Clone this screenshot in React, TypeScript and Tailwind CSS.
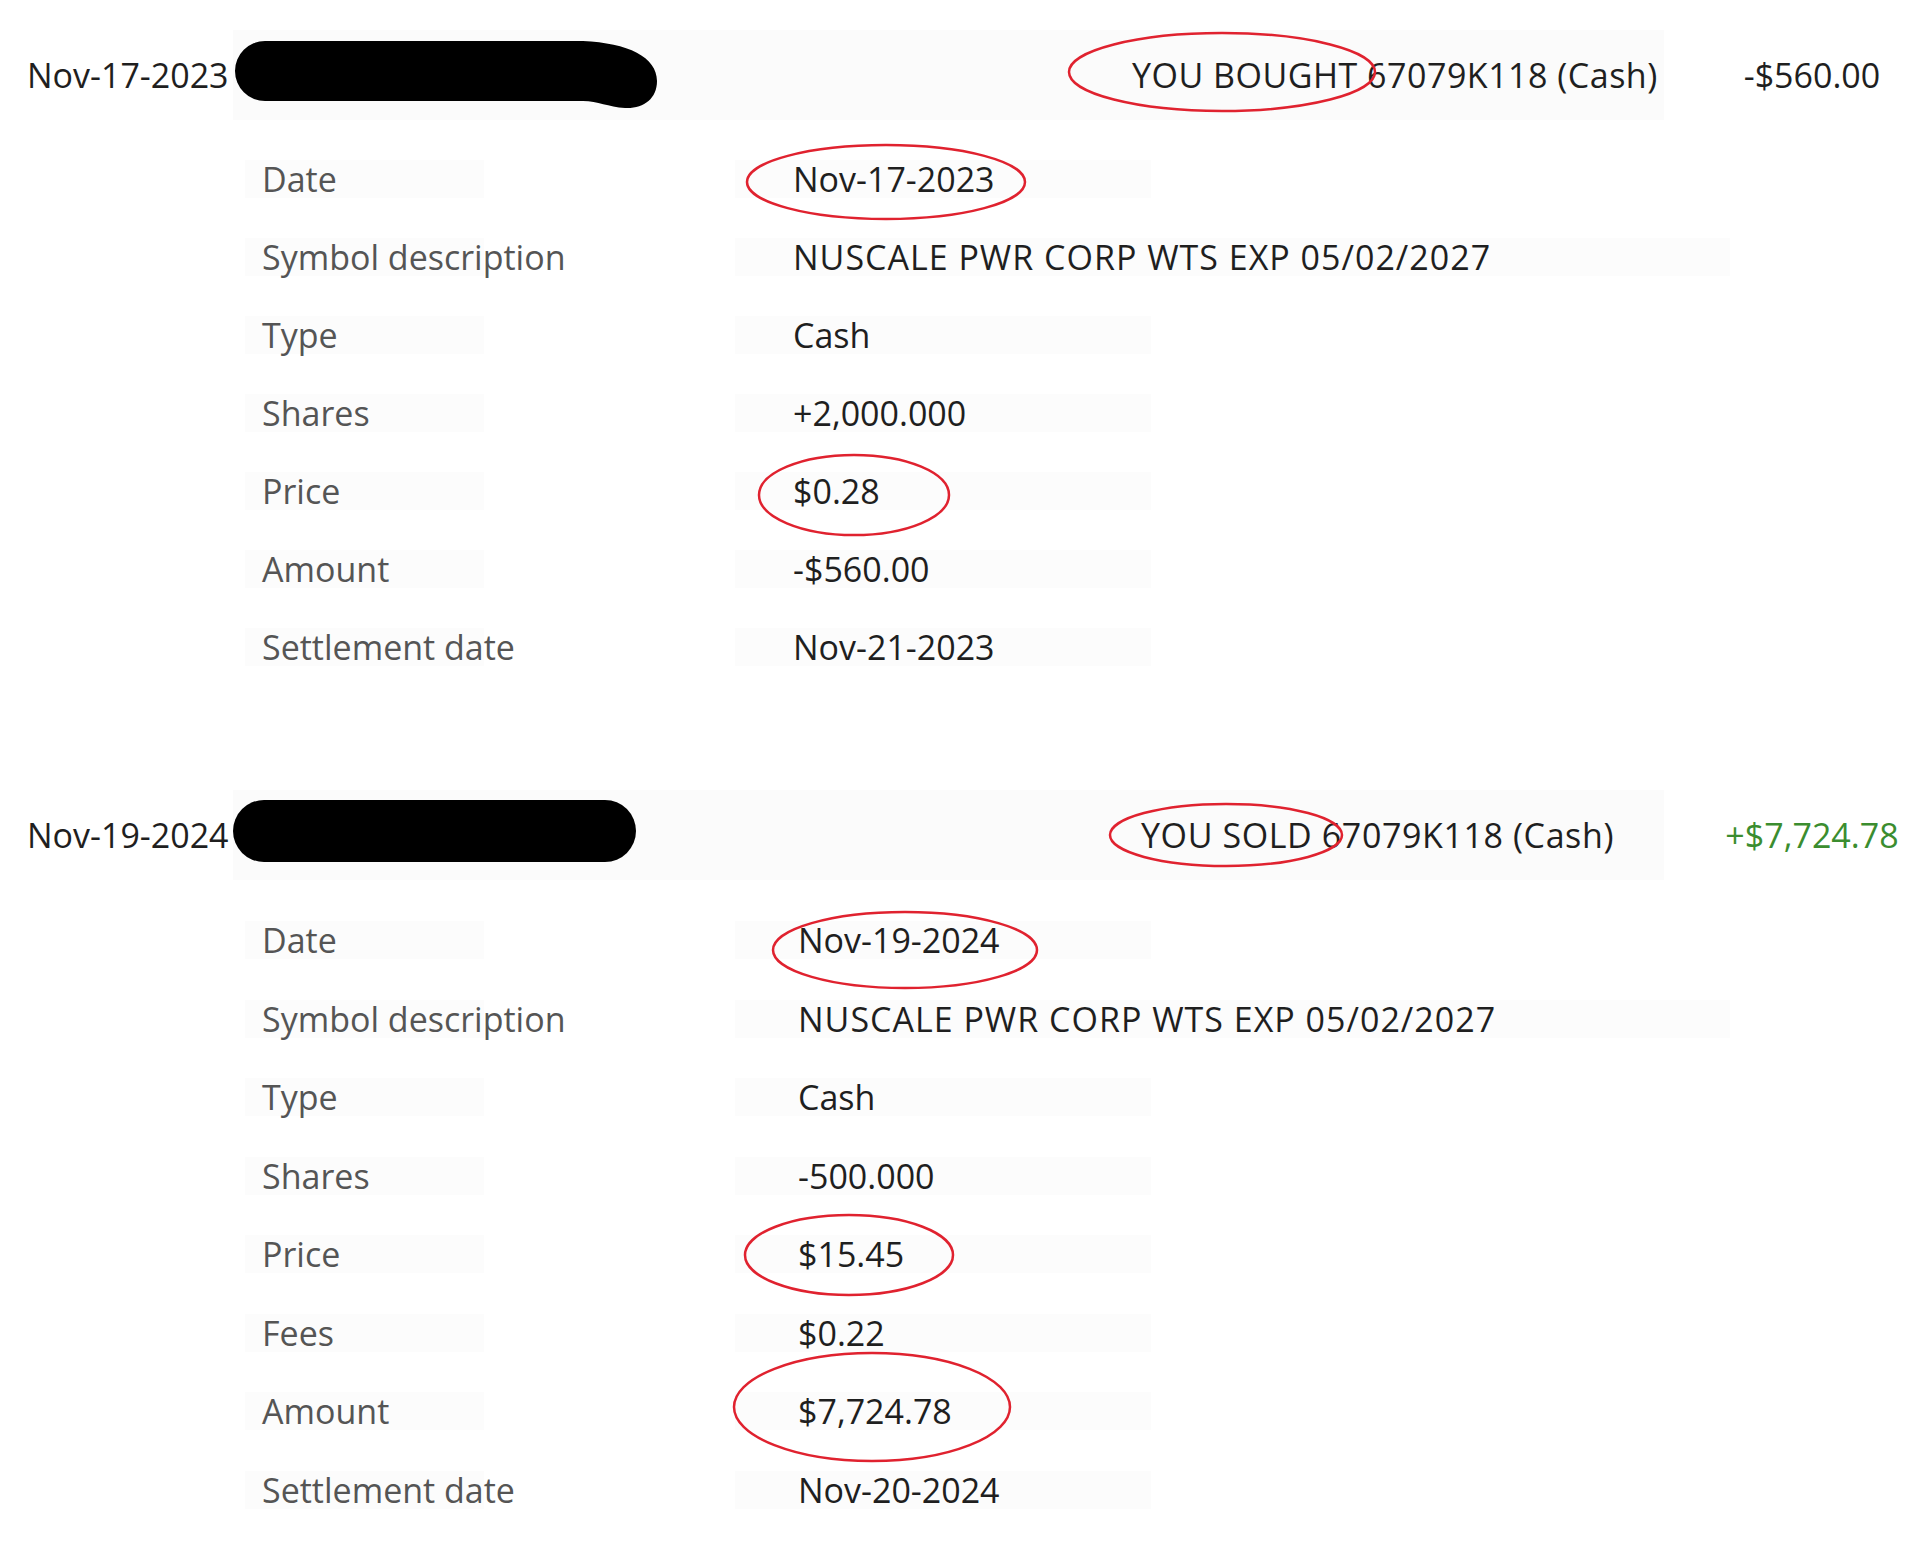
import React from "react";

type Row = { label: string; value: string; wide?: boolean };

const boughtRows: Row[] = [
  { label: "Date", value: "Nov-17-2023" },
  { label: "Symbol description", value: "NUSCALE PWR CORP WTS EXP 05/02/2027", wide: true },
  { label: "Type", value: "Cash" },
  { label: "Shares", value: "+2,000.000" },
  { label: "Price", value: "$0.28" },
  { label: "Amount", value: "-$560.00" },
  { label: "Settlement date", value: "Nov-21-2023" },
];

const soldRows: Row[] = [
  { label: "Date", value: "Nov-19-2024" },
  { label: "Symbol description", value: "NUSCALE PWR CORP WTS EXP 05/02/2027", wide: true },
  { label: "Type", value: "Cash" },
  { label: "Shares", value: "-500.000" },
  { label: "Price", value: "$15.45" },
  { label: "Fees", value: "$0.22" },
  { label: "Amount", value: "$7,724.78" },
  { label: "Settlement date", value: "Nov-20-2024" },
];

// hand-drawn red circles from the annotated screenshot
const marks = [
  { cx: 1222, cy: 72, rx: 153, ry: 39 },
  { cx: 886, cy: 182, rx: 139, ry: 37 },
  { cx: 854, cy: 495, rx: 95, ry: 40 },
  { cx: 1226, cy: 835, rx: 116, ry: 31 },
  { cx: 905, cy: 950, rx: 132, ry: 38 },
  { cx: 849, cy: 1255, rx: 104, ry: 40 },
  { cx: 872, cy: 1407, rx: 138, ry: 54 },
];

const BlobMark = () => (
  <svg width="426" height="72" viewBox="0 0 426 72" className="shrink-0">
    <path
      d="M32,2 L350,2 C395,4 424,18 424,42 C424,60 410,70 392,69 C375,68 365,62 350,62 L32,62 A30,30 0 0 1 32,2 Z"
      fill="#000"
    />
  </svg>
);

const DetailRow = ({ row, valueClass, rowClass }: { row: Row; valueClass: string; rowClass: string }) => (
  <div className={`flex items-center ${rowClass}`}>
    <div className="ml-[245px] w-[239px] h-[38px] flex items-center pl-[17px] bg-[#fcfcfc] text-[#555555] whitespace-nowrap">
      {row.label}
    </div>
    <div
      className={`ml-[251px] h-[38px] flex items-center bg-[#fcfcfc] text-[#1f1f1f] whitespace-nowrap ${valueClass} ${
        row.wide ? "w-[995px] tracking-[1px]" : "w-[416px]"
      }`}
    >
      {row.value}
    </div>
  </div>
);

const App = () => {
  return (
    <div className="relative w-[1920px] h-[1553px] bg-white overflow-hidden font-['Open_Sans','Liberation_Sans',sans-serif] text-[34px] leading-none">
      {/* bought */}
      <div className="pt-[30px]">
        <div className="h-[90px] flex items-center">
          <div className="w-[233px] pl-[27px] text-[#1f1f1f] whitespace-nowrap">Nov-17-2023</div>
          <div className="w-[1431px] h-full flex items-center bg-[#fbfbfb]">
            <BlobMark />
            <div className="ml-[473px] text-[#1f1f1f] whitespace-nowrap tracking-[0.5px]">YOU BOUGHT 67079K118 (Cash)</div>
          </div>
          <div className="ml-[40px] w-[216px] text-center text-[#1f1f1f] whitespace-nowrap">-$560.00</div>
        </div>
        <div className="mt-[20px]">
          {boughtRows.map((r) => (
            <DetailRow key={r.label} row={r} valueClass="pl-[58px]" rowClass="h-[78px]" />
          ))}
        </div>
      </div>

      {/* sold */}
      <div className="mt-[104px]">
        <div className="h-[90px] flex items-center">
          <div className="w-[233px] pl-[27px] text-[#1f1f1f] whitespace-nowrap">Nov-19-2024</div>
          <div className="w-[1431px] h-full flex items-center bg-[#fbfbfb]">
            <div className="w-[403px] h-[62px] rounded-full bg-black shrink-0 -mt-[8px]" />
            <div className="ml-[505px] text-[#1f1f1f] whitespace-nowrap tracking-[0.6px]">YOU SOLD 67079K118 (Cash)</div>
          </div>
          <div className="ml-[40px] w-[216px] text-center text-[#3b8d2f] whitespace-nowrap">+$7,724.78</div>
        </div>
        <div className="mt-[21px]">
          {soldRows.map((r) => (
            <DetailRow key={r.label} row={r} valueClass="pl-[63px]" rowClass="h-[78.5px]" />
          ))}
        </div>
      </div>

      <svg
        className="absolute left-0 top-0 pointer-events-none"
        width="1920"
        height="1553"
        viewBox="0 0 1920 1553"
      >
        {marks.map((m, i) => (
          <ellipse key={i} cx={m.cx} cy={m.cy} rx={m.rx} ry={m.ry} fill="none" stroke="#e0222f" strokeWidth="2.5" />
        ))}
      </svg>
    </div>
  );
};

export default App;
